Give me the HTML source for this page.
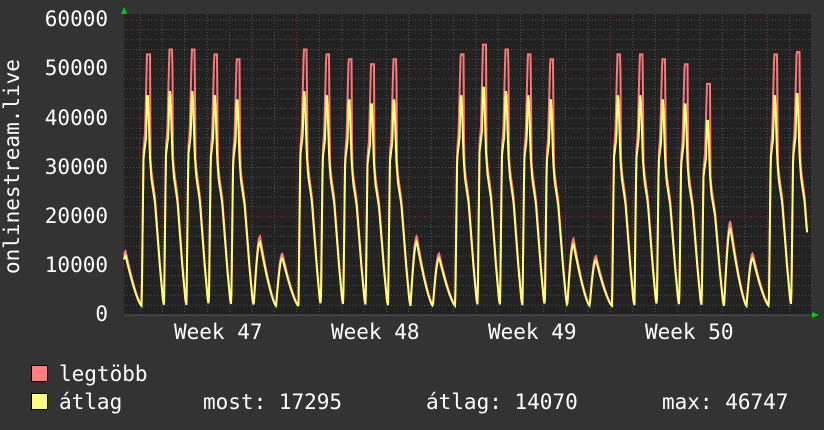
<!DOCTYPE html>
<html><head><meta charset="utf-8"><style>
html,body{margin:0;padding:0;background:#333;}
body{width:824px;height:430px;overflow:hidden;position:relative;font-family:"DejaVu Sans Mono","Liberation Mono",monospace;color:#fff;}
.t{position:absolute;font-size:21px;line-height:21px;white-space:pre;}
.yl{position:absolute;right:716px;font-size:21px;line-height:21px;}
.sq{position:absolute;left:31px;width:15px;height:15px;border:1px solid #000;}
</style></head><body>
<svg width="824" height="430" style="position:absolute;left:0;top:0">
<rect x="124" y="14" width="688" height="301" fill="#222"/>
<g id="grid"></g>
<g id="data"></g>
<polygon points="121,14 127,14 124,7" fill="#0c0"/>
<polygon points="812,312 812,318 819,315" fill="#0c0"/>
</svg>
<div class="yl" style="top:9px">60000</div>
<div class="yl" style="top:58px">50000</div>
<div class="yl" style="top:108px">40000</div>
<div class="yl" style="top:157px">30000</div>
<div class="yl" style="top:206px">20000</div>
<div class="yl" style="top:255px">10000</div>
<div class="yl" style="top:304px">0</div>
<div class="t" style="left:2px;top:274px;transform:rotate(-90deg);transform-origin:0 0;">onlinestream.live</div>
<div class="t" style="left:174px;top:322px">Week 47</div>
<div class="t" style="left:331px;top:322px">Week 48</div>
<div class="t" style="left:488px;top:322px">Week 49</div>
<div class="t" style="left:645px;top:322px">Week 50</div>
<div class="sq" style="top:365px;background:#ff7f7f"></div>
<div class="sq" style="top:393px;background:#ffff7f"></div>
<div class="t" style="left:59px;top:364px">legtöbb</div>
<div class="t" style="left:59px;top:392px">átlag</div>
<div class="t" style="left:203px;top:392px">most: 17295</div>
<div class="t" style="left:426px;top:392px">átlag: 14070</div>
<div class="t" style="left:662px;top:392px">max: 46747</div>
<script>
function Y(v){return 315-v*295/60000;}
var g=document.getElementById('grid'),h='';
for(var v=2000;v<=60000;v+=2000){var y=Y(v).toFixed(1);var maj=v%10000==0;
h+='<line x1="124" x2="812" y1="'+y+'" y2="'+y+'" stroke="'+(maj?'#8a3a3a':'#555')+'" stroke-dasharray="1,2"/>';}
for(var k=-1;k<31;k++){var x=140+22.4*k;if(x<124||x>812)continue;var maj=((k%7)+7)%7==0;
h+='<line y1="14" y2="315" x1="'+x.toFixed(1)+'" x2="'+x.toFixed(1)+'" stroke="'+(maj?'#8a3a3a':'#555')+'" stroke-dasharray="1,2"/>';}
h+='<line x1="124" x2="812" y1="315" y2="315" stroke="#555"/>';
g.innerHTML=h;
var P=[13000,53000,54000,54000,53000,52000,16000,12500,54000,53000,52000,51000,52000,16000,12500,53000,55000,54000,53000,52000,15500,12000,53000,53000,52000,51000,47000,19000,12500,53000,53500];
var RS=[[-6.3,0.04],[-4.5,0.63],[-3,0.7],[-1,1],[2,1],[2.5,0.6],[3.5,0.55],[7,0.45],[12,0.19],[15,0.06],[16.1,0.04]];
var YS=[[-6.3,0.038],[-4.5,0.6],[-2,0.68],[-1,0.84],[0,0.84],[2,0.6],[3.5,0.52],[7,0.43],[12,0.18],[15,0.055],[16.1,0.038]];
function interp(T,dx){if(dx<=T[0][0])return T[0][1];for(var i=1;i<T.length;i++){if(dx<=T[i][0]){var a=T[i-1],b=T[i];return a[1]+(b[1]-a[1])*(dx-a[0])/(b[0]-a[0]);}}return T[T.length-1][1];}
function val(x,yel){var k=Math.floor((x-141.7)/22.4)+1;if(k<0)k=0;if(k>=P.length)k=P.length-1;
var xp=148+22.4*(k-1),dx=x-xp,p=P[k];
if(p<25000){var m=yel?0.93:1;
 if(dx<-6.3)return 2000*m; if(dx<0){var f=(dx+6.3)/6.3;return (2000+(p-2000)*Math.sin(f*Math.PI/2))*m;}
 var f=Math.min(dx/16.1,1);return (2000+(p-2000)*Math.pow(1-f,1.4))*m;}
return p*interp(yel?YS:RS,dx);}
var r='',yl='';
for(var x=124;x<=808;x+=0.5){var v=val(x,0),a=val(x,1);
if(x>805){v=Math.max(v,17500);a=Math.max(a,17000);}
r+=x+','+Y(v).toFixed(1)+' ';yl+=x+','+Y(a).toFixed(1)+' ';}
document.getElementById('data').innerHTML='<polyline points="'+r+'" fill="none" stroke="#ff7777" stroke-width="2"/><polyline points="'+yl+'" fill="none" stroke="#ffff77" stroke-width="2"/>';
</script>
</body></html>
